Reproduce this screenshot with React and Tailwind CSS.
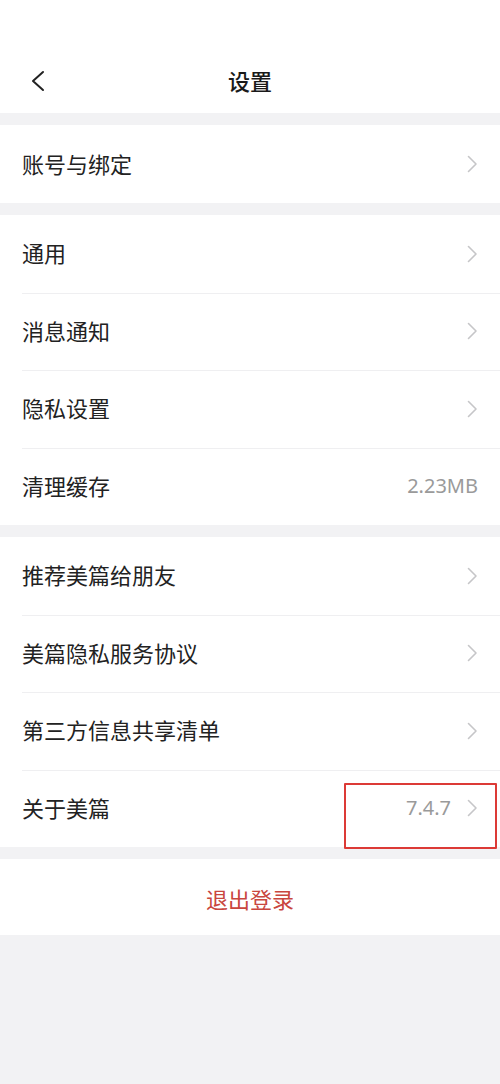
import React from 'react';

const font = { fontFamily: '"Noto Sans", "Noto Sans CJK SC", sans-serif' };

function Chevron() {
  return (
    <svg width="11" height="18" viewBox="0 0 11 18" className="shrink-0">
      <polyline points="1.5,1.5 9,9 1.5,16.5" fill="none" stroke="#c6c6c8" strokeWidth="1.6" strokeLinecap="round" strokeLinejoin="round" />
    </svg>
  );
}

function Row({ label, value, arrow = true, first, children }) {
  return (
    <div className="relative h-[77.5px] flex items-center pl-[22px]">
      {!first && <div className="absolute top-0 left-[22px] right-0 h-px bg-[#efeff1]" />}
      <span className="flex-1 text-[22px] text-[#222222]">{label}</span>
      <div className="flex items-center pr-[22px]">
        {value && <span className={`text-[20px] text-[#9a9a9a] ${arrow ? 'mr-[16px]' : ''}`}>{value}</span>}
        {arrow && <Chevron />}
      </div>
      {children}
    </div>
  );
}

function Group({ rows }) {
  return (
    <div className="bg-white mt-[12px]">
      {rows.map((r, i) => (
        <Row key={r.label} first={i === 0} {...r} />
      ))}
    </div>
  );
}

export default function App() {
  return (
    <div className="w-[500px] min-h-[1084px] bg-[#f2f2f4]" style={font}>
      {/* header */}
      <div className="bg-white h-[113px] pt-[58px]">
        <div className="relative h-[46px] flex items-center justify-center">
          <svg width="16" height="24" viewBox="0 0 16 24" className="absolute left-[30px]">
            <polyline points="13,3 3,12 13,21" fill="none" stroke="#222" strokeWidth="2" strokeLinecap="round" strokeLinejoin="round" />
          </svg>
          <span className="text-[22px] font-medium text-[#1a1a1a]">设置</span>
        </div>
      </div>

      <div className="bg-white mt-[12px]">
        <div className="h-[78px] flex items-center pl-[22px] pr-[22px]">
          <span className="flex-1 text-[22px] text-[#222222]">账号与绑定</span>
          <Chevron />
        </div>
      </div>

      <Group
        rows={[
          { label: '通用' },
          { label: '消息通知' },
          { label: '隐私设置' },
          { label: '清理缓存', value: '2.23MB', arrow: false },
        ]}
      />

      <div className="bg-white mt-[12px]">
        <Row label="推荐美篇给朋友" first />
        <Row label="美篇隐私服务协议" />
        <Row label="第三方信息共享清单" />
        <Row label="关于美篇" value="7.4.7">
          <div className="absolute right-[3px] top-[13px] w-[153px] h-[66px] border-2 border-[#dc3a36] rounded-[1px]" />
        </Row>
      </div>

      <div className="bg-white mt-[12px] h-[76px] flex items-center justify-center pt-[4px]">
        <span className="text-[22px] text-[#c9463e]">退出登录</span>
      </div>
    </div>
  );
}
